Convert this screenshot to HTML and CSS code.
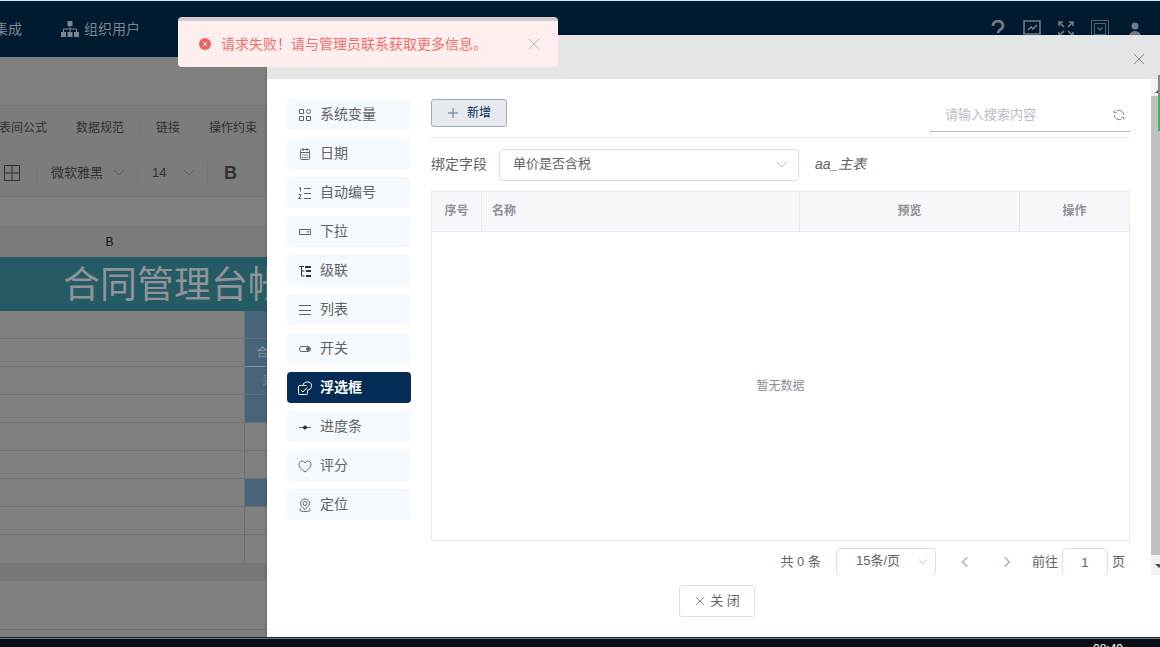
FILE: index.html
```html
<!DOCTYPE html>
<html lang="zh-CN">
<head>
<meta charset="utf-8">
<title>浮选框</title>
<link rel="stylesheet" href="styles.css">
</head>
<body>
<div class="app">
  <header class="topbar">
    <nav class="topnav">
      <a href="#">集成</a>
      <a href="#"><svg class="org" viewBox="0 0 18 16"><path fill="currentColor" stroke="none" d="M6.500 0h5v5h-5zM0 11h5v5H0zM6.500 11h5v5h-5zM13 11h5v5h-5z"/><path d="M9 5v6M2.500 11V8h13v3" fill="none" stroke="currentColor"/></svg>组织用户</a>
    </nav>
    <div class="tools">
      <button aria-label="帮助"><svg viewBox="0 0 20 18"><path d="M5 6a5 4.500 0 1 1 7.500 3.500Q10 11 10 13M10 15v3" stroke-width="2.800"/></svg></button>
      <button aria-label="监控"><svg viewBox="0 0 20 18"><path d="M2 1h16v13H2zM5 17h10" stroke-width="1.600"/><path d="M6 10l3-3 2 2 4-4" stroke-width="1.600"/></svg></button>
      <button aria-label="全屏"><svg viewBox="0 0 20 18"><path d="M3 6V2h4M3 2l5 5M13 2h4v4M17 2l-5 5M3 12v4h4M3 16l5-5M13 16h4v-4M17 16l-5-5" stroke-width="1.600"/></svg></button>
      <button class="soft" aria-label="下载"><svg viewBox="0 0 20 18"><path d="M1.500.5h17v17h-17zM4.500 3.500h11v11h-11z"/><path d="M7.500 7.500l2.500 2.500 2.500-2.500" stroke-width="1.500"/></svg></button>
      <button aria-label="用户"><svg viewBox="0 0 20 18"><g fill="currentColor" stroke="none"><circle cx="11" cy="6" r="3.500"/><path d="M5 17c0-8 12-8 12 0z"/></g></svg></button>
    </div>
  </header>
  <div class="blank"></div>
  <section class="ribbon">
    <div class="menu">
      <a href="#">表间公式</a><a href="#">数据规范</a><a class="ruled" href="#">链接</a><a href="#">操作约束</a>
    </div>
    <div class="format">
      <button class="borders" aria-label="边框"><svg viewBox="0 0 18 18"><path d="M1.500 1.500h15v15h-15zM9 1.500v15M1.500 9h15"/></svg></button>
      <button class="pick font">微软雅黑<svg viewBox="0 0 12 8"><path d="M1 1l5 5 5-5"/></svg></button>
      <button class="pick size">14<svg viewBox="0 0 12 8"><path d="M1 1l5 5 5-5"/></svg></button>
      <button class="bold" aria-label="加粗">B</button>
    </div>
  </section>
  <div class="formula"></div>
  <table class="sheet">
    <thead>
      <tr class="letters"><th class="colb">B</th><th></th></tr>
      <tr class="title"><th colspan="2">合同管理台帐</th></tr>
    </thead>
    <tbody>
      <tr><td></td><td class="blue"></td></tr>
      <tr><td></td><td class="blue lit">合同编号</td></tr>
      <tr><td></td><td class="blue short">采购人</td></tr>
      <tr><td></td><td class="blue"></td></tr>
      <tr><td></td><td></td></tr>
      <tr><td></td><td></td></tr>
      <tr><td></td><td class="blue"></td></tr>
      <tr><td></td><td></td></tr>
      <tr><td></td><td></td></tr>
    </tbody>
  </table>
  <div class="hscroll"></div>
  <div class="status"></div>

  <section class="dialog" role="dialog" aria-label="浮选框">
    <div class="dialog-head">
      <button class="x" aria-label="关闭对话框"><svg viewBox="0 0 12 12"><path d="M1 1l10 10M11 1L1 11"/></svg></button>
    </div>
    <div class="dialog-body">
      <nav class="side">
        <button><svg viewBox="0 0 14 14"><path d="M1.500 1.500h4v4h-4zM1.500 8.500h4v4h-4zM8.500 8.500h4v4h-4z"/><circle cx="10.500" cy="3.500" r="2"/></svg>系统变量</button>
        <button><svg viewBox="0 0 14 14"><path d="M2.500 3.500q0-1 1-1h7q1 0 1 1v8q0 1-1 1h-7q-1 0-1-1zM2.500 5.500h9M5 1v3M9 1v3"/><path d="M4 8h1.500M6.300 8h1.500M8.600 8h1.500M4 10.500h1.500M6.300 10.500h1.500M8.600 10.500h1.500"/></svg>日期</button>
        <button><svg viewBox="0 0 14 14"><path d="M6 2.500h7M6 7.500h7M6 12.500h7M1 2.500l1.500-1v4M.5 8.500h2v1.500l-2 2.500h3"/></svg>自动编号</button>
        <button><svg viewBox="0 0 14 14"><path d="M1.500 4.500h11v5h-11z"/><path d="M8.500 6.200h3l-1.500 2z" fill="currentColor" stroke="none"/></svg>下拉</button>
        <button class="dark"><svg viewBox="0 0 14 14"><path d="M1 2.500h5M3.500 2.500v9.500h3M3.500 7h3"/><path stroke-width="2" d="M7 3h6M8 7h5M8 12h5"/></svg>级联</button>
        <button><svg viewBox="0 0 14 14"><path d="M1 2.500h12M1 7.500h12M1 11.500h12"/></svg>列表</button>
        <button><svg viewBox="0 0 14 14"><rect x="1.500" y="4.500" width="11" height="5" rx="2.500"/><circle cx="10" cy="7" r="1.500" fill="currentColor"/></svg>开关</button>
        <button class="active" aria-current="true"><svg viewBox="0 0 14 14"><path d="M9.500 9v3.500q0 1-1 1h-7q-1 0-1-1v-7q0-1 1-1h7M3 9l2 2 4-4.500"/><path d="M5 4.500C5 0 13.500-.5 13.500 4.500 13.500 7.500 12 9 9.500 9"/></svg>浮选框</button>
        <button><svg viewBox="0 0 14 14"><path d="M1 7.500h12"/><circle cx="7" cy="7.500" r="2" fill="#303133" stroke="none"/></svg>进度条</button>
        <button><svg viewBox="0 0 14 14"><path d="M7 13C3 10 1 8 1 5.500 1 1.500 5.500 1 7 4c1.500-3 6-2.500 6 1.500C13 8 11 10 7 13z"/></svg>评分</button>
        <button><svg viewBox="0 0 14 14"><path d="M7 11.500C4 9 2.500 7.500 2.500 5.500a4.500 4.500 0 0 1 9 0C11.500 7.500 10 9 7 11.500zM3 10.500c-3 1.500-1 3 4 3s7-1.500 4-3"/><circle cx="7" cy="5.500" r="2"/></svg>定位</button>
      </nav>
      <main class="main">
        <div class="actions">
          <button class="add"><svg viewBox="0 0 12 12"><path d="M6 1v10M1 6h10"/></svg>新增</button>
          <div class="search">
            <input type="text" aria-label="搜索" placeholder="请输入搜索内容">
            <button aria-label="刷新"><svg viewBox="0 0 12 12"><path d="M3.500 2A4.800 4.800 0 0 1 10.800 6M8.500 10A4.800 4.800 0 0 1 1.200 6M1.200 4V1.500M1.200 3.700h2.500M10.800 8v2.500M10.800 8.300H8.300"/></svg></button>
          </div>
        </div>
        <div class="bind">
          <label for="field">绑定字段</label>
          <div class="select">
            <select id="field"><option>单价是否含税</option></select>
            <svg viewBox="0 0 12 8"><path d="M1 1l5 5 5-5"/></svg>
          </div>
          <em>aa_主表</em>
        </div>
        <table class="grid">
          <colgroup><col class="c-no"><col><col class="c-view"><col class="c-op"></colgroup>
          <thead><tr><th>序号</th><th class="name">名称</th><th>预览</th><th>操作</th></tr></thead>
          <tbody><tr><td colspan="4">暂无数据</td></tr></tbody>
        </table>
        <div class="pager">
          <span>共 0 条</span>
          <div class="select pages">
            <select aria-label="每页条数"><option>15条/页</option></select>
            <svg viewBox="0 0 12 8"><path d="M1 1l5 5 5-5"/></svg>
          </div>
          <button aria-label="上一页"><svg viewBox="0 0 8 12"><path d="M6 2L2 6l4 4"/></svg></button>
          <button aria-label="下一页"><svg viewBox="0 0 8 12"><path d="M2 2l4 4-4 4"/></svg></button>
          <label class="goto">前往<input type="text" value="1">页</label>
        </div>
      </main>
      <div class="vscroll">
        <svg viewBox="0 0 16 17"><path d="M4 14l4-4 4 4z"/></svg>
        <div class="thumb"></div>
        <svg class="down" viewBox="0 0 16 20"><path d="M4 9l4 4 4-4z"/></svg>
      </div>
    </div>
    <div class="dialog-foot">
      <button class="close"><svg viewBox="0 0 12 12"><path d="M2 2l8 8M10 2l-8 8"/></svg>关 闭</button>
    </div>
  </section>
  <div class="edge-tab"></div>
  <div class="toast" role="alert">
    <svg class="err" viewBox="0 0 12 12"><circle cx="6" cy="6" r="6"/><path d="M4 4l4 4M8 4L4 8"/></svg>
    <p>请求失败！请与管理员联系获取更多信息。</p>
    <button aria-label="关闭提示"><svg viewBox="0 0 12 12"><path d="M1 1l10 10M11 1L1 11"/></svg></button>
  </div>
</div>
<footer class="taskbar"><time>08:49</time></footer>
</body>
</html>
```
FILE: styles.css
```css
* { box-sizing: border-box; }
body {
  margin: 0;
  height: 100vh;
  display: flex;
  flex-direction: column;
  overflow: hidden;
  font: 14px/20px "Liberation Sans", "Noto Sans CJK SC", sans-serif;
  color: #606266;
}
button, input, select { font: inherit; color: inherit; }
button { border: 0; background: none; padding: 0; }
a { color: inherit; text-decoration: none; }
svg { display: block; flex: none; fill: none; stroke: currentColor; }

.app {
  position: relative;
  flex: 1;
  min-height: 0;
  overflow: hidden;
  display: flex;
  flex-direction: column;
  background: #808080;
  border-top: 1px solid #d5eaf2;
}
.topbar {
  flex: none;
  height: 56px;
  display: flex;
  justify-content: space-between;
  align-items: center;
  padding-right: 16px;
  background: #001a30;
  color: #7d868e;
}
.topnav { display: flex; gap: 39px; margin-left: -6px; }
.topnav a { display: flex; align-items: center; gap: 5px; }
.org { width: 18px; height: 16px; stroke-width: 1; }
.tools { display: flex; gap: 14px; color: #717b84; }
.tools svg { width: 20px; height: 18px; }
.tools .soft { color: #56626d; }
.blank { flex: none; height: 48px; }
.ribbon {
  flex: none;
  height: 92px;
  background: #7c7c7c;
  border-top: 1px solid #737373;
  border-bottom: 1px solid #747474;
  color: #303133;
}
.menu { display: flex; align-items: center; height: 44px; margin-left: -1px; font-size: 12px; }
.menu a { width: 77px; white-space: nowrap; }
.menu a:nth-child(2) { width: 64px; }
.menu a:nth-child(3) { width: 69px; padding-left: 15px; border-left: 1px solid #757575; }
.format { display: flex; align-items: center; height: 45px; font-size: 13px; }
.format button { height: 22px; display: flex; align-items: center; justify-content: space-between; }
.borders { width: 36px; padding-left: 3px; }
.borders svg { width: 18px; height: 18px; }
.pick { border-left: 1px solid #747474; padding: 0 12px 0 14px; }
.pick svg { width: 12px; height: 8px; color: #5d5d5d; }
.font { width: 101px; }
.size { width: 70px; }
.format .bold { border-left: 1px solid #747474; padding-left: 16px; font-weight: bold; font-size: 18px; }
.formula { flex: none; height: 29px; }
.sheet { flex: none; width: 100%; border-collapse: collapse; table-layout: fixed; color: #909398; }
.sheet th { font-weight: normal; padding: 0; }
.letters { height: 30px; background: #7b7b7b; border-top: 1px solid #747474; color: #111; }
.letters .colb { width: 244px; padding-right: 25px; font-size: 12px; }
.title { height: 54px; background: #255b65; }
.title th { padding: 4px 0 0 63px; text-align: left; font-size: 37px; line-height: 48px; }
.sheet td { height: 28px; padding: 0 0 0 12px; border-bottom: 1px solid #707070; border-left: 1px solid #707070; font-size: 12px; line-height: 20px; }
.sheet td:first-child { border-left: 0; }
.sheet tr:last-child td { border-bottom: 0; }
.sheet .blue { background: #46647b; }
.sheet .lit { border-top: 1px solid #8b9499; border-bottom: 1px solid #8b9499; }
.sheet .short { padding-left: 18px; }
.hscroll { flex: none; height: 18px; background: #777; }
.status { flex: none; height: 49px; border-bottom: 1px solid #6c6c6c; }

.dialog {
  position: absolute;
  inset: 34px -7px 0 267px;
  display: flex;
  flex-direction: column;
  background: #fff;
  box-shadow: 0 1px 3px rgba(0, 0, 0, .3);
}
.dialog-head { flex: none; height: 44px; padding-right: 22px; display: flex; justify-content: flex-end; align-items: center; background: #e5e5e5; }
.x { color: #85888c; }
.x svg { width: 12px; height: 12px; margin-top: 4px; }
.dialog-body { flex: 1; min-height: 0; display: flex; overflow: hidden; }
.side { flex: none; width: 124px; margin: 20px 20px 0; display: flex; flex-direction: column; gap: 8px; }
.side button { height: 31px; flex: none; display: flex; align-items: center; gap: 8px; padding: 0 0 2px 11px; border-radius: 4px; background: #f4f9fe; }
.side svg { width: 14px; height: 14px; margin-top: 2px; }
.side .dark svg { color: #303133; }
.side .active { background: #042c55; color: #fff; font-weight: bold; }
.main { flex: 1; min-width: 0; padding-top: 20px; }
.actions { display: flex; justify-content: space-between; height: 39px; border-bottom: 1px solid #e6e8eb; }
.add { height: 28px; width: 76px; display: flex; align-items: center; justify-content: center; gap: 8px; border: 1px solid #9aabbb; border-radius: 3px; background: #e6eaee; color: #042c55; font-size: 12px; }
.add svg { width: 12px; height: 12px; color: #60758d; }
.search { width: 200px; height: 33px; display: flex; align-items: center; padding: 0 5px 0 15px; border-bottom: 1px solid #b8bbc0; }
.search input { flex: 1; min-width: 0; border: 0; padding: 0; background: none; font-size: 13px; }
.search input::placeholder { color: #b8bcc4; }
.search svg { width: 12px; height: 12px; color: #808389; }
.bind { display: flex; align-items: center; height: 32px; margin: 11px 0 10px; }
.bind label { width: 68px; padding-bottom: 2px; }
.bind em { margin-left: 16px; padding-bottom: 2px; }
.select { position: relative; width: 300px; height: 32px; font-size: 13px; }
.select select { width: 100%; height: 100%; appearance: none; padding: 0 13px 2px; border: 1px solid #dcdfe6; border-radius: 4px; background: #fff; }
.select svg { position: absolute; right: 11px; top: 12px; width: 12px; height: 8px; color: #b9bdc5; pointer-events: none; }
.grid { width: 100%; table-layout: fixed; border-collapse: collapse; font-size: 12px; line-height: 18px; color: #8d9096; border: 1px solid #e6e9ee; }
.c-no { width: 50px; }
.c-view { width: 220px; }
.c-op { width: 110px; }
.grid th { height: 40px; padding: 0 0 2px; background: #f5f7fa; border: 1px solid #e6e9ee; }
.grid .name { text-align: left; padding-left: 10px; }
.grid td { height: 309px; padding: 0; text-align: center; }
.pager { display: flex; justify-content: flex-end; align-items: center; height: 28px; margin-top: 7px; padding-right: 5px; font-size: 13px; }
.pager .select { width: 100px; height: 28px; margin: 0 15px; }
.pager .select select { padding: 0 19px 2px; }
.pager .select svg { width: 10px; right: 8px; top: 10px; }
.pager button { width: 28px; height: 28px; display: flex; align-items: center; justify-content: center; color: #b5b9c0; }
.pager button + button { margin: 0 11px 0 14px; }
.pager button svg { width: 10px; height: 14px; stroke-width: 1.5; }
.goto { display: flex; align-items: center; gap: 4px; }
.goto input { width: 46px; height: 28px; padding: 0; text-align: center; border: 1px solid #dcdfe6; border-radius: 4px; }
.vscroll { flex: none; width: 16px; margin-left: 21px; display: flex; flex-direction: column; background: #f1f1f1; }
.vscroll svg { width: 16px; height: 17px; fill: #505050; stroke: none; }
.vscroll .down { height: 20px; }
.thumb { flex: 1; background: #c1c1c1; }
.dialog-foot { flex: none; height: 62px; padding-top: 10px; display: flex; justify-content: center; align-items: flex-start; }
.close { width: 76px; height: 32px; display: flex; align-items: center; justify-content: center; gap: 4px; border: 1px solid #dcdfe6; border-radius: 3px; font-size: 13px; }
.close svg { width: 12px; height: 12px; color: #85888c; }

.edge-tab { position: absolute; top: 74px; right: 0; width: 2px; height: 56px; background: linear-gradient(#888 0 21px, #2ebd59 21px); }
.toast {
  position: absolute;
  left: 178px;
  top: 16px;
  width: 380px;
  height: 50px;
  display: flex;
  align-items: center;
  gap: 10px;
  padding: 0 18px 0 21px;
  border-top: 4px solid #d3cace;
  border-radius: 4px;
  background: #feeeee;
  color: #f56c6c;
}
.toast p { flex: 1; margin: 0; white-space: nowrap; }
.toast svg { width: 12px; height: 12px; }
.toast .err circle { fill: #f06363; stroke: none; }
.toast .err path { stroke: #fff; }
.toast button { color: #b9bdc5; }
.taskbar {
  flex: none;
  height: 10px;
  padding: 4px 37px 0 0;
  overflow: hidden;
  border-top: 1px solid #1c2a35;
  box-shadow: inset 0 1px #6b7780;
  background: #090d15;
  color: #fff;
  text-align: right;
  font-size: 12px;
  line-height: 14px;
}
.taskbar time { display: block; }
```
